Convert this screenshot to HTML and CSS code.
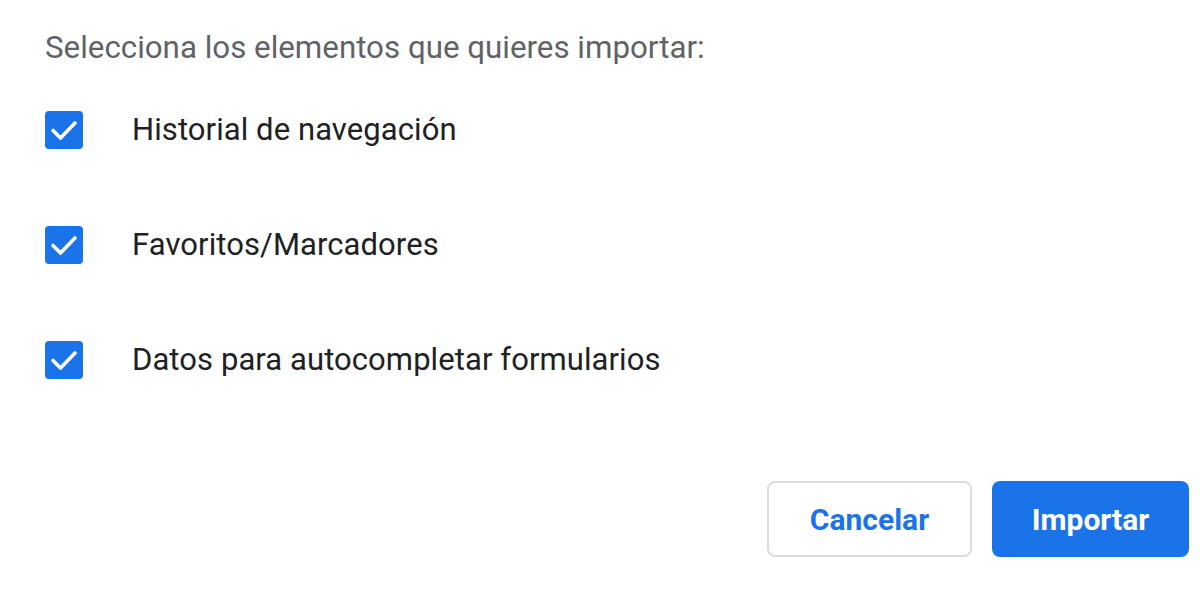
FILE: index.html
```html
<!DOCTYPE html>
<html lang="es">
<head>
	<meta charset="UTF-8">
	<title>Importar</title>
	<link rel="stylesheet" href="styles.css">
</head>
<body>
<div class="dialog">
	<p class="lead">Selecciona los elementos que quieres importar:</p>
	<ul class="options">
		<li class="option">
			<span class="check">
				<svg width="38" height="38" viewBox="0 0 38 38"><path d="M8 19.5 L15.5 27 L30 12" fill="none" stroke="#fff" stroke-width="3.6" stroke-linecap="round" stroke-linejoin="round"/></svg>
			</span>
			<span class="label">Historial de navegación</span>
		</li>
		<li class="option">
			<span class="check">
				<svg width="38" height="38" viewBox="0 0 38 38"><path d="M8 19.5 L15.5 27 L30 12" fill="none" stroke="#fff" stroke-width="3.6" stroke-linecap="round" stroke-linejoin="round"/></svg>
			</span>
			<span class="label">Favoritos/Marcadores</span>
		</li>
		<li class="option">
			<span class="check">
				<svg width="38" height="38" viewBox="0 0 38 38"><path d="M8 19.5 L15.5 27 L30 12" fill="none" stroke="#fff" stroke-width="3.6" stroke-linecap="round" stroke-linejoin="round"/></svg>
			</span>
			<span class="label">Datos para autocompletar formularios</span>
		</li>
	</ul>
	<div class="actions">
		<button class="btn btn-cancel">Cancelar</button>
		<button class="btn btn-primary">Importar</button>
	</div>
</div>
</body>
</html>
```

FILE: styles.css
```css
*{
	margin: 0;
	padding: 0;
	box-sizing: border-box;
}
body{
	background: #fff;
	font-family: Roboto, "Liberation Sans", sans-serif;
	width: 1200px;
	height: 590px;
	overflow: hidden;
}
.dialog{
	padding: 30px 11px 0 45px;
}
.lead{
	font-size: 31.3px;
	line-height: 36px;
	color: #5f6368;
}
.options{
	list-style: none;
	margin-top: 45px;
	display: flex;
	flex-direction: column;
	gap: 77px;
}
.option{
	display: flex;
	align-items: center;
	height: 38px;
}
.check{
	width: 38px;
	height: 38px;
	border-radius: 4px;
	background: #1a73e8;
	display: flex;
	flex-shrink: 0;
}
.label{
	margin-left: 49px;
	font-size: 31px;
	letter-spacing: 0.08px;
	color: #202124;
	line-height: 38px;
}
.actions{
	margin-top: 102px;
	display: flex;
	justify-content: flex-end;
	gap: 20px;
}
.btn{
	height: 76px;
	border-radius: 8px;
	font-family: Roboto, "Liberation Sans", sans-serif;
	font-size: 30px;
	font-weight: 700;
	cursor: pointer;
}
.btn-cancel{
	width: 205px;
	background: #fff;
	border: 2px solid #dadce0;
	color: #1a73e8;
}
.btn-primary{
	width: 197px;
	background: #1a73e8;
	border: none;
	color: #fff;
}
```
